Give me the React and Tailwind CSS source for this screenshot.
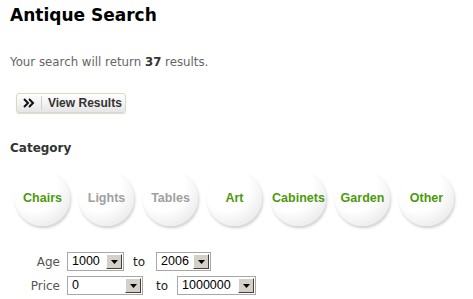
const categories = [
  { name: 'Chairs', on: true },
  { name: 'Lights', on: false },
  { name: 'Tables', on: false },
  { name: 'Art', on: true },
  { name: 'Cabinets', on: true },
  { name: 'Garden', on: true },
  { name: 'Other', on: true },
];

function Select({ value, width }) {
  return (
    <div
      className="flex h-[19px] items-stretch border border-[#a7a7a7] bg-white p-px"
      style={{ width }}
    >
      <span className="flex-1 pl-[3px] font-['Liberation_Sans',sans-serif] text-[12.5px] leading-[15px] text-black">{value}</span>
      <span className="flex w-[16px] items-center justify-center border border-t-white border-l-white border-r-[#404040] border-b-[#404040] bg-[#d4d0c8]">
        <svg width="7" height="4" viewBox="0 0 7 4">
          <path d="M0 0h7L3.5 4z" fill="#000" />
        </svg>
      </span>
    </div>
  );
}

export default function App() {
  return (
    <div className="h-[299px] w-[473px] bg-white font-['DejaVu_Sans',sans-serif]">
      <h1 className="pl-[10px] pt-[4px] text-[17px] font-bold leading-[22px] text-black">Antique Search</h1>

      <p className="mt-[29px] pl-[10px] text-[11.8px] leading-[14px] text-[#666]">
        Your search will return <span className="font-bold text-[#333]">37</span> results.
      </p>

      <button className="ml-[16px] mt-[24px] flex h-[20px] w-[110px] items-center rounded-[3px] border border-[#d6dcc4] bg-gradient-to-b from-white to-[#e6e6e6] shadow-[0_1px_1px_rgba(0,0,0,0.15)]">
        <svg width="12" height="10" viewBox="0 0 12 10" className="ml-[6px]">
          <path d="M1 1l4 4-4 4M6 1l4 4-4 4" fill="none" stroke="#111" strokeWidth="2" />
        </svg>
        <span className="ml-[6px] h-[14px] w-px bg-[#cfcfcf]" />
        <span className="ml-[6px] whitespace-nowrap font-['Liberation_Sans',sans-serif] text-[12px] font-bold text-[#333]">View Results</span>
      </button>

      <h2 className="mt-[27px] pl-[10px] text-[12px] font-bold leading-[16px] text-[#333]">Category</h2>

      <div className="mt-[15px] flex gap-[9px] pl-[15px]">
        {categories.map((c) => (
          <div
            key={c.name}
            className="flex h-[55px] w-[55px] items-center justify-center rounded-full bg-[radial-gradient(circle_at_35%_30%,#ffffff_45%,#e0e0e0_100%)] shadow-[1px_2px_3px_rgba(0,0,0,0.2)]"
          >
            <span className={`font-['Liberation_Sans',sans-serif] text-[12.5px] font-bold ${c.on ? 'text-[#4c9a0c]' : 'text-[#a0a0a0]'}`}>
              {c.name}
            </span>
          </div>
        ))}
      </div>

      <div className="mt-[26px] flex flex-col gap-[5px] text-[12px] text-[#555]">
        <div className="flex items-center">
          <span className="w-[61px] pr-px text-right">Age</span>
          <span className="ml-[6px]"><Select value="1000" width={57} /></span>
          <span className="ml-[9px] text-[#222]">to</span>
          <span className="ml-[11px]"><Select value="2006" width={55} /></span>
        </div>
        <div className="flex items-center">
          <span className="w-[61px] pr-px text-right">Price</span>
          <span className="ml-[6px]"><Select value="0" width={76} /></span>
          <span className="ml-[13px] text-[#222]">to</span>
          <span className="ml-[9px]"><Select value="1000000" width={79} /></span>
        </div>
      </div>
    </div>
  );
}
